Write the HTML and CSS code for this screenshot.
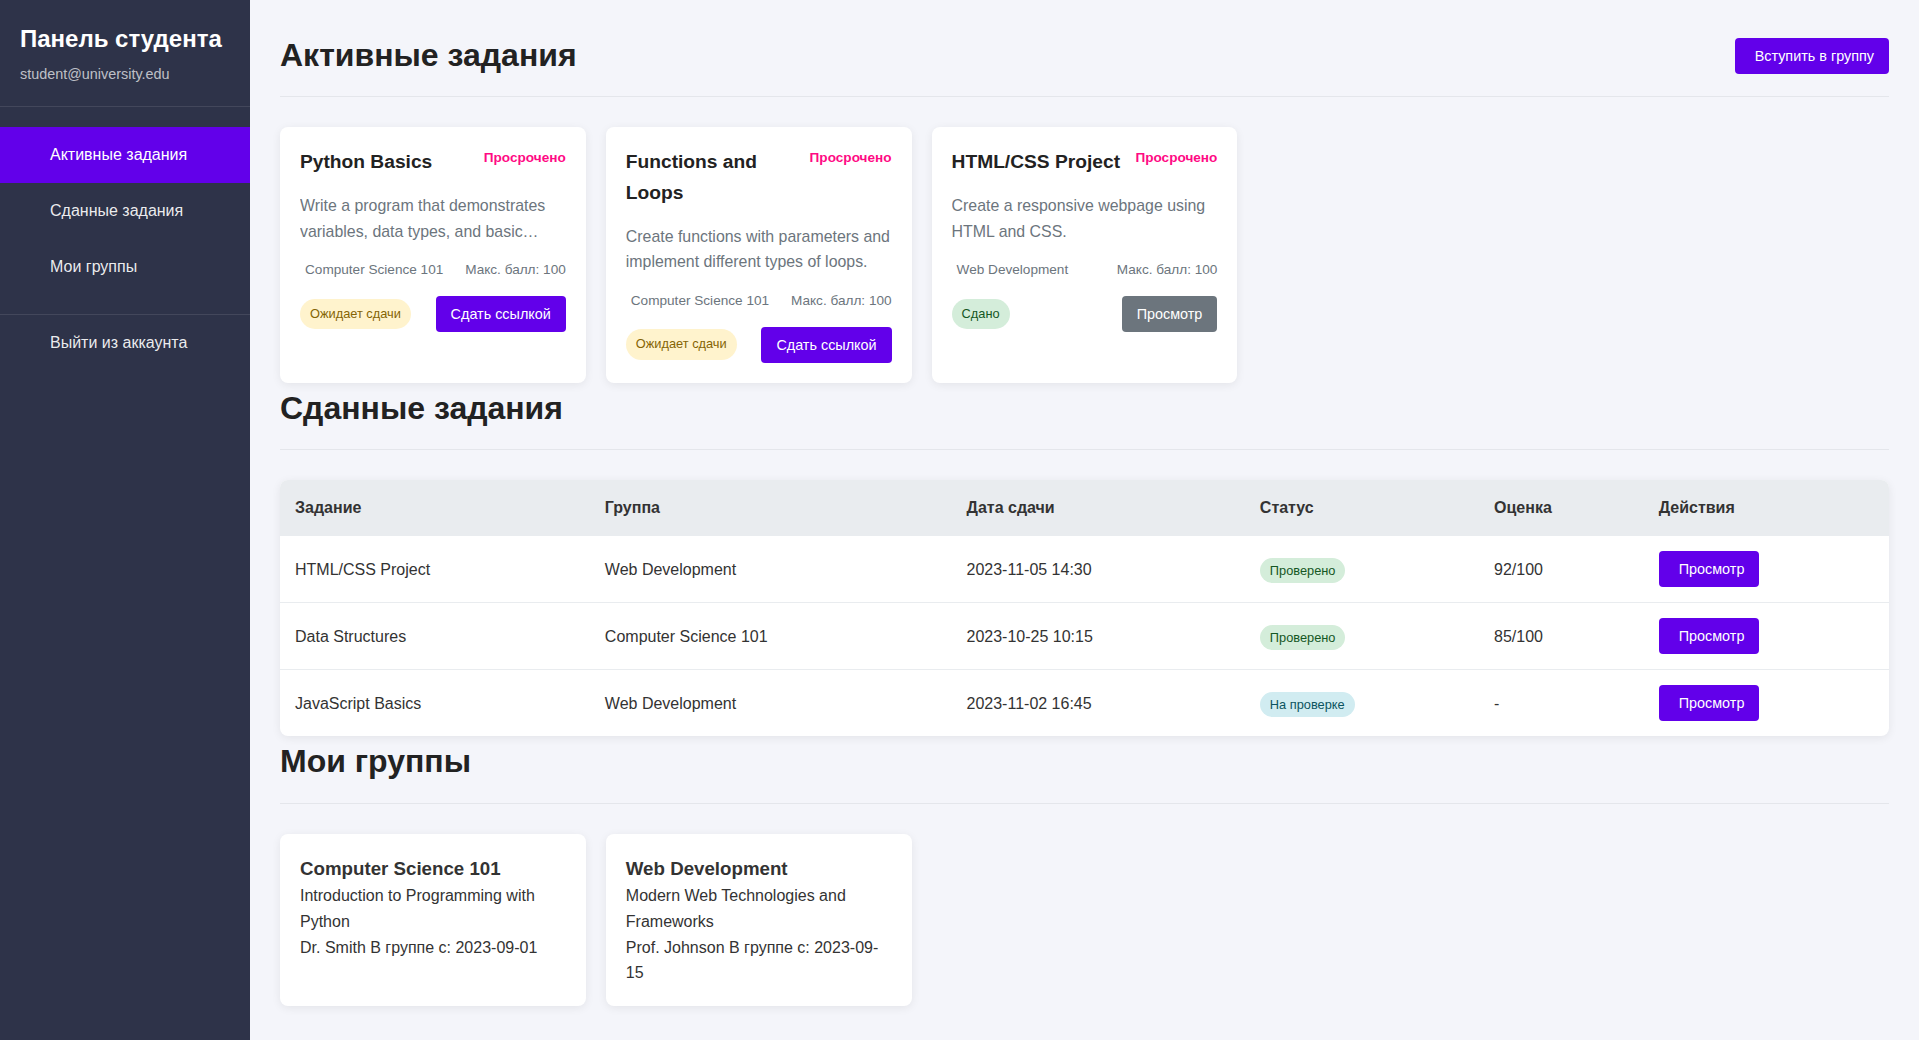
FILE: index.html
```html
<!DOCTYPE html>
<html lang="ru">
<head>
<meta charset="utf-8">
<title>Панель студента</title>
<link rel="stylesheet" href="styles.css">
</head>
<body>
<div class="layout">
  <aside class="sidebar">
    <div class="sidebar-header">
      <h2 class="sidebar-title">Панель студента</h2>
      <p class="sidebar-email">student@university.edu</p>
    </div>
    <ul class="nav">
      <li><a class="nav-link active" href="#">Активные задания</a></li>
      <li><a class="nav-link" href="#">Сданные задания</a></li>
      <li><a class="nav-link" href="#">Мои группы</a></li>
    </ul>
    <ul class="nav nav-bottom">
      <li><a class="nav-link" href="#">Выйти из аккаунта</a></li>
    </ul>
  </aside>

  <main class="main">
    <section class="section">
      <div class="section-header">
        <h1 class="section-title">Активные задания</h1>
        <button class="btn btn-primary btn-icon">Вступить в группу</button>
      </div>
      <div class="card-grid">
        <div class="card task-card">
          <div class="task-header">
            <h3 class="task-title">Python Basics</h3>
            <span class="deadline overdue">Просрочено</span>
          </div>
          <p class="task-desc">Write a program that demonstrates variables, data types, and basic operations in Python.</p>
          <div class="task-meta">
            <span class="task-group">Computer Science 101</span>
            <span>Макс. балл: 100</span>
          </div>
          <div class="task-footer">
            <span class="badge badge-pending">Ожидает сдачи</span>
            <button class="btn btn-primary">Сдать ссылкой</button>
          </div>
        </div>
        <div class="card task-card">
          <div class="task-header">
            <h3 class="task-title">Functions and Loops</h3>
            <span class="deadline overdue">Просрочено</span>
          </div>
          <p class="task-desc">Create functions with parameters and implement different types of loops.</p>
          <div class="task-meta">
            <span class="task-group">Computer Science 101</span>
            <span>Макс. балл: 100</span>
          </div>
          <div class="task-footer">
            <span class="badge badge-pending">Ожидает сдачи</span>
            <button class="btn btn-primary">Сдать ссылкой</button>
          </div>
        </div>
        <div class="card task-card">
          <div class="task-header">
            <h3 class="task-title">HTML/CSS Project</h3>
            <span class="deadline overdue">Просрочено</span>
          </div>
          <p class="task-desc">Create a responsive webpage using HTML and CSS.</p>
          <div class="task-meta">
            <span class="task-group">Web Development</span>
            <span>Макс. балл: 100</span>
          </div>
          <div class="task-footer">
            <span class="badge badge-success">Сдано</span>
            <button class="btn btn-secondary">Просмотр</button>
          </div>
        </div>
      </div>
    </section>

    <section class="section">
      <div class="section-header">
        <h2 class="section-title">Сданные задания</h2>
      </div>
      <table class="table">
        <thead>
          <tr>
            <th>Задание</th>
            <th>Группа</th>
            <th>Дата сдачи</th>
            <th>Статус</th>
            <th>Оценка</th>
            <th>Действия</th>
          </tr>
        </thead>
        <tbody>
          <tr>
            <td>HTML/CSS Project</td>
            <td>Web Development</td>
            <td>2023-11-05 14:30</td>
            <td><span class="badge badge-success">Проверено</span></td>
            <td>92/100</td>
            <td><button class="btn btn-primary btn-icon">Просмотр</button></td>
          </tr>
          <tr>
            <td>Data Structures</td>
            <td>Computer Science 101</td>
            <td>2023-10-25 10:15</td>
            <td><span class="badge badge-success">Проверено</span></td>
            <td>85/100</td>
            <td><button class="btn btn-primary btn-icon">Просмотр</button></td>
          </tr>
          <tr>
            <td>JavaScript Basics</td>
            <td>Web Development</td>
            <td>2023-11-02 16:45</td>
            <td><span class="badge badge-info">На проверке</span></td>
            <td>-</td>
            <td><button class="btn btn-primary btn-icon">Просмотр</button></td>
          </tr>
        </tbody>
      </table>
    </section>

    <section class="section">
      <div class="section-header">
        <h2 class="section-title">Мои группы</h2>
      </div>
      <div class="card-grid">
        <div class="card group-card">
          <h3 class="group-title">Computer Science 101</h3>
          <p class="group-text">Introduction to Programming with Python</p>
          <p class="group-text">Dr. Smith В группе с: 2023-09-01</p>
        </div>
        <div class="card group-card">
          <h3 class="group-title">Web Development</h3>
          <p class="group-text">Modern Web Technologies and Frameworks</p>
          <p class="group-text">Prof. Johnson В группе с: 2023-09-15</p>
        </div>
      </div>
    </section>
  </main>
</div>
</body>
</html>
```

FILE: styles.css
```css
* {
  box-sizing: border-box;
}

html, body {
  margin: 0;
  padding: 0;
}

body {
  font-family: "Liberation Sans", Arial, sans-serif;
  font-size: 16px;
  line-height: 1.6;
  color: #333;
  background: #f4f5fa;
}

.layout {
  display: flex;
  min-height: 100vh;
}

/* Sidebar */
.sidebar {
  width: 250px;
  flex-shrink: 0;
  background: #2e3349;
  color: #fff;
}

.sidebar-header {
  padding: 20px;
  border-bottom: 1px solid rgba(255, 255, 255, 0.1);
}

.sidebar-title {
  margin: 0;
  font-size: 24px;
  font-weight: bold;
  color: #fff;
}

.sidebar-email {
  margin: 5px 0 0;
  font-size: 14.4px;
  color: rgba(255, 255, 255, 0.7);
}

.nav {
  list-style: none;
  margin: 0;
  padding: 20px 0;
  border-bottom: 1px solid rgba(255, 255, 255, 0.1);
}

.nav-bottom {
  padding: 0;
  border-bottom: none;
}

.nav-link {
  display: block;
  padding: 15px 20px 15px 50px;
  color: rgba(255, 255, 255, 0.92);
  text-decoration: none;
  font-size: 16px;
}

.nav-link.active {
  background: #6200ea;
  color: #fff;
}

/* Main */
.main {
  flex: 1;
  min-width: 0;
  padding: 30px;
}

.section-header {
  display: flex;
  justify-content: space-between;
  align-items: center;
  padding-bottom: 15px;
  border-bottom: 1px solid #e4e6eb;
  margin-bottom: 30px;
}

.section-title {
  margin: 0;
  font-size: 32px;
  font-weight: bold;
  color: #222;
  line-height: 1.6;
}

.btn {
  display: inline-block;
  border: none;
  border-radius: 4px;
  padding: 8px 15px;
  font-family: "Liberation Sans", Arial, sans-serif;
  font-size: 14.4px;
  line-height: 20px;
  color: #fff;
  cursor: pointer;
}

.btn-icon {
  padding-left: 20px;
}

.btn-primary {
  background: #6200ea;
}

.btn-secondary {
  background: #6c757d;
}

/* Cards */
.card-grid {
  display: grid;
  grid-template-columns: repeat(auto-fill, minmax(300px, 1fr));
  gap: 20px;
}

.card {
  background: #fff;
  border-radius: 8px;
  box-shadow: 0 2px 10px rgba(0, 0, 0, 0.07);
  padding: 20px;
}

.task-header {
  display: flex;
  justify-content: space-between;
  align-items: flex-start;
  gap: 12px;
  margin-bottom: 15px;
}

.task-title {
  margin: 0;
  font-size: 19.2px;
  font-weight: bold;
  color: #222;
  line-height: 1.6;
}

.deadline {
  font-size: 13.6px;
  font-weight: bold;
  white-space: nowrap;
  line-height: 1.6;
}

.overdue {
  color: #ff0a84;
}

.task-desc {
  margin: 0;
  font-size: 15.9px;
  line-height: 25.6px;
  color: #6c757d;
  display: -webkit-box;
  -webkit-line-clamp: 2;
  -webkit-box-orient: vertical;
  overflow: hidden;
}

.task-meta {
  display: flex;
  justify-content: space-between;
  margin-top: 15px;
  font-size: 13.6px;
  color: #6c757d;
}

.task-group {
  padding-left: 5px;
}

.task-footer {
  display: flex;
  justify-content: space-between;
  align-items: center;
  margin-top: 15px;
}

.badge {
  padding: 5px 10px;
  border-radius: 20px;
  font-size: 12.8px;
}

.badge-pending {
  background: #fff3cd;
  color: #856404;
}

.badge-success {
  background: #d4edda;
  color: #155724;
}

.badge-info {
  background: #d1ecf1;
  color: #0c5460;
}

/* Table */
.table {
  width: 100%;
  border-collapse: collapse;
  background: #fff;
  border-radius: 8px;
  overflow: hidden;
  box-shadow: 0 2px 10px rgba(0, 0, 0, 0.07);
}

.table th {
  text-align: left;
  padding: 15px;
  background: #e9ecef;
  color: #333;
  font-weight: bold;
  border-bottom: 1px solid #e9ecef;
}

.table td {
  padding: 15px;
  border-bottom: 1px solid #e9ecef;
  color: #333;
}

.table tbody tr:last-child td {
  border-bottom: none;
}

/* Groups */
.group-title {
  margin: 0;
  font-size: 18.72px;
  font-weight: bold;
  color: #333;
  line-height: 1.6;
}

.group-text {
  margin: 0;
  color: #333;
}
```
